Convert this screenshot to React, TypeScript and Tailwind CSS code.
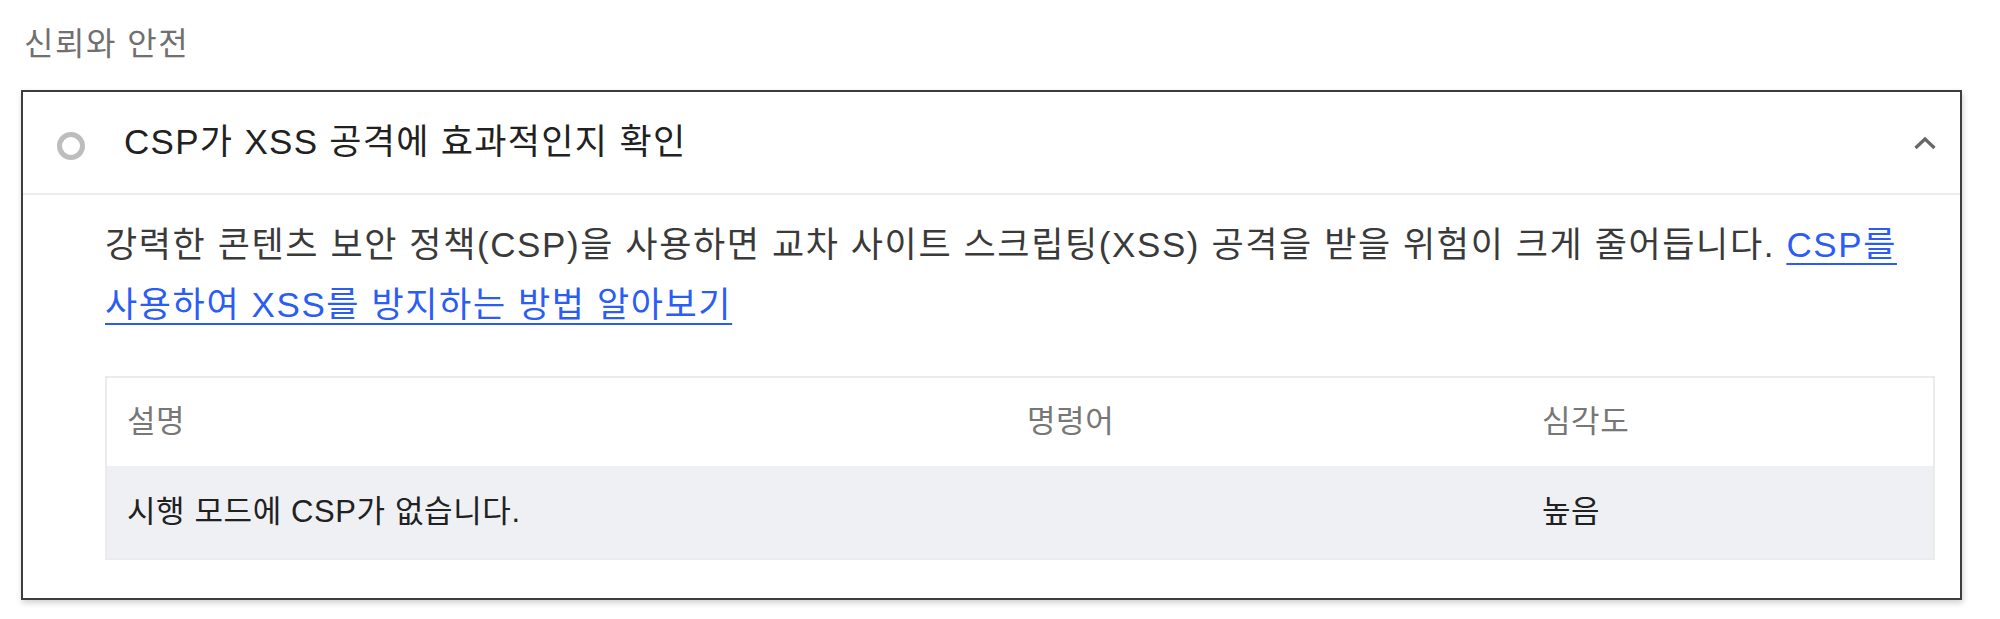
import React from 'react';

const font = 'font-["Liberation_Sans","Noto_Sans_CJK_KR",sans-serif]';

const Chevron = () => (
  <svg width="24" height="14" viewBox="0 0 24 14" className="shrink-0">
    <polyline points="2.5,12 12,3 21.5,12" fill="none" stroke="#666" strokeWidth="3.2" />
  </svg>
);

const App = () => {
  return (
    <div className={`${font} bg-white w-[2000px] h-[619px] pl-[21px] pr-[38px] pt-[20px]`}>
      <div className="h-[48px] leading-[48px] text-[32px] tracking-[1.5px] text-[#707070] pl-[3px]">신뢰와 안전</div>

      <div className="mt-[22px] border-2 border-[#3d3d3d] bg-white shadow-[1px_3px_6px_rgba(0,0,0,0.18)]">
        {/* audit header */}
        <div className="h-[103px] flex items-center pl-[34px] pr-[23px] border-b-2 border-[#ececec]">
          <span className="w-[28px] h-[28px] rounded-full border-[5px] border-[#bdbdbd] mt-[6px] shrink-0" />
          <span className="ml-[39px] flex-1 text-[35px] tracking-[1.3px] text-[#212121]">CSP가 XSS 공격에 효과적인지 확인</span>
          <Chevron />
        </div>

        {/* audit body */}
        <div className="pl-[82px] pr-[25px] pt-[20px] pb-[38px]">
          <p className="text-[35px] tracking-[1.6px] leading-[60px] text-[#3a3a3a] break-keep">
            강력한 콘텐츠 보안 정책(CSP)을 사용하면 교차 사이트 스크립팅(XSS) 공격을 받을 위험이 크게 줄어듭니다.{' '}
            <a href="#" className="text-[#2b5cf6] underline decoration-2 underline-offset-[6px]">
              CSP를 사용하여 XSS를 방지하는 방법 알아보기
            </a>
          </p>

          <div className="mt-[41px] border-2 border-[#ebebeb]">
            <div className="grid grid-cols-[900px_515px_1fr] h-[88px] items-center text-[31px] tracking-[0.6px] text-[#777]">
              <div className="pl-[20px]">설명</div>
              <div className="pl-[20px]">명령어</div>
              <div className="pl-[20px]">심각도</div>
            </div>
            <div className="grid grid-cols-[900px_515px_1fr] h-[92px] items-center bg-[#eff0f4] text-[31px] tracking-[0.6px] text-[#212121]">
              <div className="pl-[20px]">시행 모드에 CSP가 없습니다.</div>
              <div className="pl-[20px]" />
              <div className="pl-[20px]">높음</div>
            </div>
          </div>
        </div>
      </div>
    </div>
  );
};

export default App;
